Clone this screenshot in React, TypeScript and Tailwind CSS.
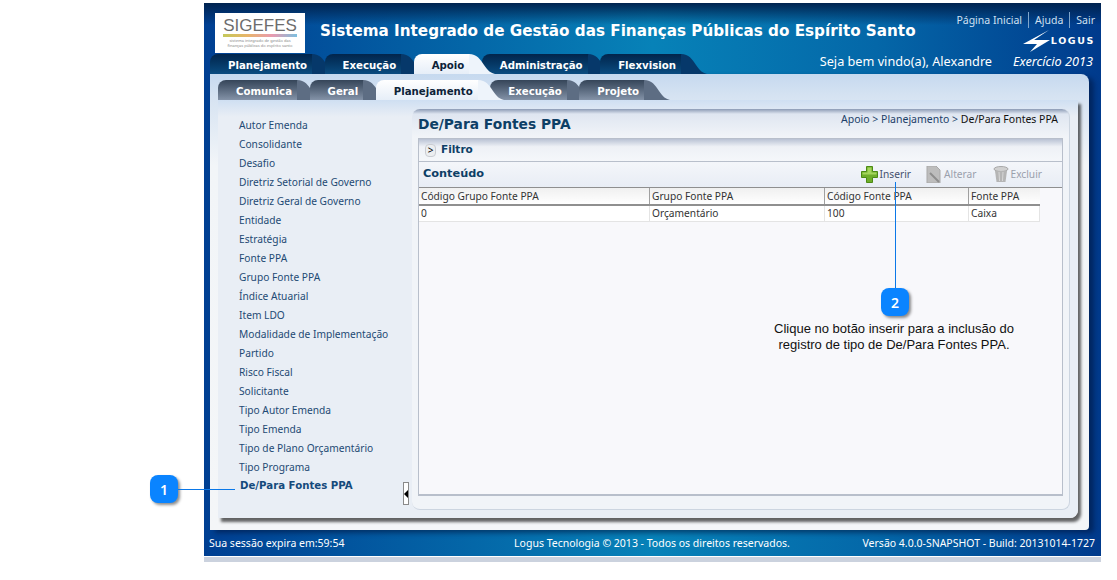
const tahoma = { fontFamily: '"Noto Sans", sans-serif' }
const verdana = { fontFamily: '"DejaVu Sans", sans-serif' }

const mainTabs = ['Planejamento', 'Execução', 'Apoio', 'Administração', 'Flexvision']
const subTabs = ['Comunica', 'Geral', 'Planejamento', 'Execução', 'Projeto']
const menu = [
  'Autor Emenda',
  'Consolidante',
  'Desafio',
  'Diretriz Setorial de Governo',
  'Diretriz Geral de Governo',
  'Entidade',
  'Estratégia',
  'Fonte PPA',
  'Grupo Fonte PPA',
  'Índice Atuarial',
  'Item LDO',
  'Modalidade de Implementação',
  'Partido',
  'Risco Fiscal',
  'Solicitante',
  'Tipo Autor Emenda',
  'Tipo Emenda',
  'Tipo de Plano Orçamentário',
  'Tipo Programa',
]

function Tail({ color }: { color: string }) {
  return (
    <svg width="26" height="20" viewBox="0 0 26 20" className="absolute left-full top-0 -ml-px">
      <path d="M0 0 C8 0 11 5 15 11 C19 17 22 19 26 20 L0 20 Z" fill={color} />
    </svg>
  )
}

function Tab({ label, active, sub }: { label: string; active?: boolean; sub?: boolean }) {
  const idle = sub
    ? 'bg-gradient-to-b from-[#354559] to-[#8493a8] text-white'
    : 'bg-gradient-to-b from-[#02254c] to-[#0b4c80] text-white'
  return (
    <div
      className={`relative h-5 mr-[11.5px] pl-[18px] pr-[6px] pt-1 rounded-tl-lg text-[10.2px] font-bold leading-[15px] whitespace-nowrap ${
        active ? 'z-10 bg-gradient-to-b from-white to-[#e6eef8] text-[#0c2238]' : idle
      }`}
      style={verdana}
    >
      {label}
      <Tail color={active ? '#eef4fb' : sub ? '#5d6d83' : '#06386a'} />
    </div>
  )
}

function Callout({ n }: { n: number }) {
  return (
    <div className="w-7 h-7 rounded-lg bg-[#0a84ff] text-white text-[14px] font-semibold flex items-center justify-center shadow-[2px_2px_3px_rgba(0,0,0,0.45)]">
      {n}
    </div>
  )
}

function PlusIcon() {
  return (
    <svg width="17" height="17" viewBox="0 0 17 17">
      <path d="M5.5 .5h6v5h5v6h-5v5h-6v-5h-5v-6h5z" fill="#6fae2a" stroke="#4c8a14" />
      <path d="M6.5 1.5h4v5h-4z M1.5 6.5h14v2h-14z" fill="#a5d65c" />
    </svg>
  )
}

function EditIcon() {
  return (
    <svg width="16" height="17" viewBox="0 0 16 17">
      <path d="M1 0h9l4 4v13H1z" fill="#bdbdbd" stroke="#a9a9a9" />
      <path d="M4 7l9 9" stroke="#8d8d8d" strokeWidth="2" />
    </svg>
  )
}

function TrashIcon() {
  return (
    <svg width="16" height="17" viewBox="0 0 16 17">
      <ellipse cx="8" cy="3" rx="7" ry="2.5" fill="#d0d0d0" stroke="#a8a8a8" />
      <path d="M2 5l1.5 11h9L14 5z" fill="#b5b5b5" />
      <path d="M6 6l.5 9M10 6l-.5 9" stroke="#d8d8d8" />
    </svg>
  )
}

export default function App() {
  return (
    <div className="relative w-[1117px] h-[580px] bg-white pt-[3px] pl-[204px] overflow-hidden" style={tahoma}>
      <div className="w-[897px]">
        <div className="bg-[linear-gradient(90deg,#003f92_0%,#0467a8_30%,#0782b8_50%,#0467a8_75%,#003a8c_100%)]">
          <div className="bg-[linear-gradient(180deg,#00234f_0%,rgba(0,35,79,0)_4%)]">
            {/* cabeçalho */}
            <div className="h-[51px] flex pl-[11px] pr-[6px] pt-[10px]">
              <div className="w-[90px] h-10 bg-white flex flex-col items-center pt-[5px]">
                <div
                  className="text-[#6d6d6d] text-[17px] leading-[15px]"
                  style={{ fontFamily: '"Liberation Sans", Arial, sans-serif' }}
                >
                  SIGEFES
                </div>
                <div className="w-[74px] h-[3px] mt-px bg-[linear-gradient(90deg,#c4c95a,#e8b46a,#e89ab0,#7cc0e0)]" />
                <div className="text-[#888] text-[4px] leading-[5px] mt-px whitespace-nowrap">sistema integrado de gestão das</div>
                <div className="text-[#888] text-[4px] leading-[5px] whitespace-nowrap">finanças públicas do espírito santo</div>
              </div>
              <div
                className="ml-[15px] mt-[7px] text-white font-bold text-[15.2px] leading-[22px] whitespace-nowrap"
                style={verdana}
              >
                Sistema Integrado de Gestão das Finanças Públicas do Espírito Santo
              </div>
              <div className="ml-auto flex flex-col items-end">
                <div className="flex items-center text-[#cfe0f2] text-[10.5px] leading-4 h-4 -mt-[1px]">
                  <span>Página Inicial</span>
                  <span className="mx-[6px] h-4 border-l border-[#7fa6cc]" />
                  <span>Ajuda</span>
                  <span className="mx-[6px] h-4 border-l border-[#7fa6cc]" />
                  <span>Sair</span>
                </div>
                <div className="flex items-center mt-[2px]">
                  <svg width="28" height="22" viewBox="0 0 28 22">
                    <path d="M26 0L0 14H14L7 22L27 10H11Z" fill="#fff" />
                  </svg>
                  <span className="text-white text-[9.5px] font-bold tracking-[1.6px] leading-3" style={verdana}>LOGUS</span>
                </div>
              </div>
            </div>
            {/* abas principais */}
            <div className="h-5 flex pl-[6px] pr-[8px]">
              {mainTabs.map((t) => (
                <Tab key={t} label={t} active={t === 'Apoio'} />
              ))}
              <div className="ml-auto flex text-white text-[12.7px] leading-[15px] whitespace-nowrap">
                <span className="mr-[21px]">Seja bem vindo(a), Alexandre</span>
                <span className="italic">Exercício 2013</span>
              </div>
            </div>
            {/* painel */}
            <div className="mx-[6px] w-[879px] h-[456px] rounded-tr-lg rounded-br-sm bg-[linear-gradient(180deg,#c6d9ef_0%,#d6e3f2_5%,#f2f5f8_20%,#f4f6f8_100%)] shadow-[5px_3px_5px_rgba(0,20,60,0.55)] pt-[6px] pl-2 pr-[11px]">
              <div className="flex h-5">
                {subTabs.map((t) => (
                  <Tab key={t} label={t} sub active={t === 'Planejamento'} />
                ))}
              </div>
              <div className="h-[418px] flex rounded-br-lg bg-[linear-gradient(180deg,#cfdff2_0%,#e9eef5_4%,#e9eef5_100%)] shadow-[3px_4px_3px_rgba(0,0,0,0.6)] pt-[9px]">
                <div className="relative w-[194px] pl-[21px] pt-[8px] text-[10.2px] text-[#1e4a74]">
                  {menu.map((m) => (
                    <div key={m} className="h-[19px] leading-[16px] whitespace-nowrap">
                      {m}
                    </div>
                  ))}
                  <div className="h-[19px] ml-px leading-[16px] font-bold text-[10.2px] text-[#154a7c] whitespace-nowrap" style={verdana}>De/Para Fontes PPA</div>
                  <div className="absolute right-[3px] top-[373px] w-[6px] h-[23px] bg-white border border-[#8a8a8a] flex items-center justify-center">
                    <span className="w-0 h-0 border-y-[4px] border-y-transparent border-r-[4px] border-r-black" />
                  </div>
                </div>
                <div className="w-[658px] h-[401px] rounded-lg bg-[#f1f4f8] border-b border-r border-[#ccd5e0] bg-[linear-gradient(180deg,#8c9bb5_0px,#dfe6f1_5px,#f1f4f8_28px)] px-[6px] pt-[1px]">
                  <div className="h-[28px] flex items-center justify-between pr-[5px]">
                    <span className="text-[#0d3f66] font-bold text-[13.8px]" style={verdana}>De/Para Fontes PPA</span>
                    <span className="text-[#1c3f68] text-[10.5px] -mt-[8px] whitespace-nowrap">
                      Apoio &gt; Planejamento &gt; <span className="text-[#111]">De/Para Fontes PPA</span>
                    </span>
                  </div>
                  <div className="h-[358px] w-[645px] border border-[#b8bfcb] bg-white">
                    <div className="h-[23px] flex items-center pl-[6px] border-b border-[#b8bfcb] bg-[linear-gradient(180deg,#b9c2d4_0%,#eef1f6_35%,#f5f7fa_100%)]">
                      <span className="w-[11px] h-[13px] mr-[5px] bg-[#eceef0] border border-[#c9ccd2] rounded-sm flex items-center justify-center text-[10px] leading-none text-black">
                        &gt;
                      </span>
                      <span className="text-[#0d3f66] font-bold text-[10.5px]" style={verdana}>Filtro</span>
                    </div>
                    <div className="h-[26px] flex items-center justify-between pl-1 pr-5 border-b border-[#8f8f8f] bg-[linear-gradient(180deg,#f4f6fa_0%,#e8edf5_100%)]">
                      <span className="text-[#0d3f66] font-bold text-[11.3px]" style={verdana}>Conteúdo</span>
                      <div className="flex items-center text-[10.2px]">
                        <PlusIcon />
                        <span className="ml-[2px] mr-[15px] text-[#44506e]">Inserir</span>
                        <EditIcon />
                        <span className="ml-[2px] mr-4 text-[#9aa0ac]">Alterar</span>
                        <TrashIcon />
                        <span className="ml-[2px] text-[#9aa0ac]">Excluir</span>
                      </div>
                    </div>
                    <div className="h-[307px] bg-[#f8f8fb] border-b border-[#b8bfcb]">
                      <div className="w-[621px] h-[18px] flex items-center text-[10.2px] text-[#333] border-b-2 border-[#8f8f8f] bg-[linear-gradient(180deg,#f0f0f0_0%,#ffffff_100%)]">
                        <div className="w-[231px] h-full pl-[2px] leading-[17px] border-r border-[#a0a0a0]">Código Grupo Fonte PPA</div>
                        <div className="w-[175px] h-full pl-[2px] leading-[17px] border-r border-[#a0a0a0]">Grupo Fonte PPA</div>
                        <div className="w-[144px] h-full pl-[2px] leading-[17px] border-r border-[#a0a0a0]">Código Fonte PPA</div>
                        <div className="w-[71px] h-full pl-[2px] leading-[17px]">Fonte PPA</div>
                      </div>
                      <div className="w-[621px] h-4 flex text-[10.2px] text-[#333] bg-white border-b border-[#e4e4e4]">
                        <div className="w-[231px] pl-[2px] leading-[15px] border-r border-[#e4e4e4]">0</div>
                        <div className="w-[175px] pl-[2px] leading-[15px] border-r border-[#e4e4e4]">Orçamentário</div>
                        <div className="w-[144px] pl-[2px] leading-[15px] border-r border-[#e4e4e4]">100</div>
                        <div className="w-[71px] pl-[2px] leading-[15px] border-r border-[#e4e4e4]">Caixa</div>
                      </div>
                    </div>
                  </div>
                </div>
              </div>
            </div>
            {/* rodapé */}
            <div className="h-[26px] grid grid-cols-[1fr_auto_1fr] items-center pl-[5px] pr-[6px] pt-px text-white text-[10.5px] whitespace-nowrap">
              <span>Sua sessão expira em:59:54</span>
              <span>Logus Tecnologia © 2013 - Todos os direitos reservados.</span>
              <span className="text-right">Versão 4.0.0-SNAPSHOT - Build: 20131014-1727</span>
            </div>
          </div>
        </div>
        <div className="h-px bg-white" />
        <div className="h-[5px] bg-[#cbd2de]" />
      </div>

      {/* chamada 1 */}
      <div className="absolute left-[150px] top-[475px] flex items-center">
        <Callout n={1} />
        <div className="w-[57px] h-px bg-[#0b78e8]" />
      </div>
      {/* chamada 2 */}
      <div className="absolute left-[881px] top-[182px] flex flex-col items-center">
        <div className="w-px h-[106px] bg-[#0b78e8]" />
        <Callout n={2} />
      </div>
      <div
        className="absolute left-[744px] top-[321px] w-[300px] text-center text-[13px] leading-4 text-[#111]"
        style={{ fontFamily: '"Liberation Sans", Arial, sans-serif' }}
      >
        Clique no botão inserir para a inclusão do
        <br />
        registro de tipo de De/Para Fontes PPA.
      </div>
    </div>
  )
}
